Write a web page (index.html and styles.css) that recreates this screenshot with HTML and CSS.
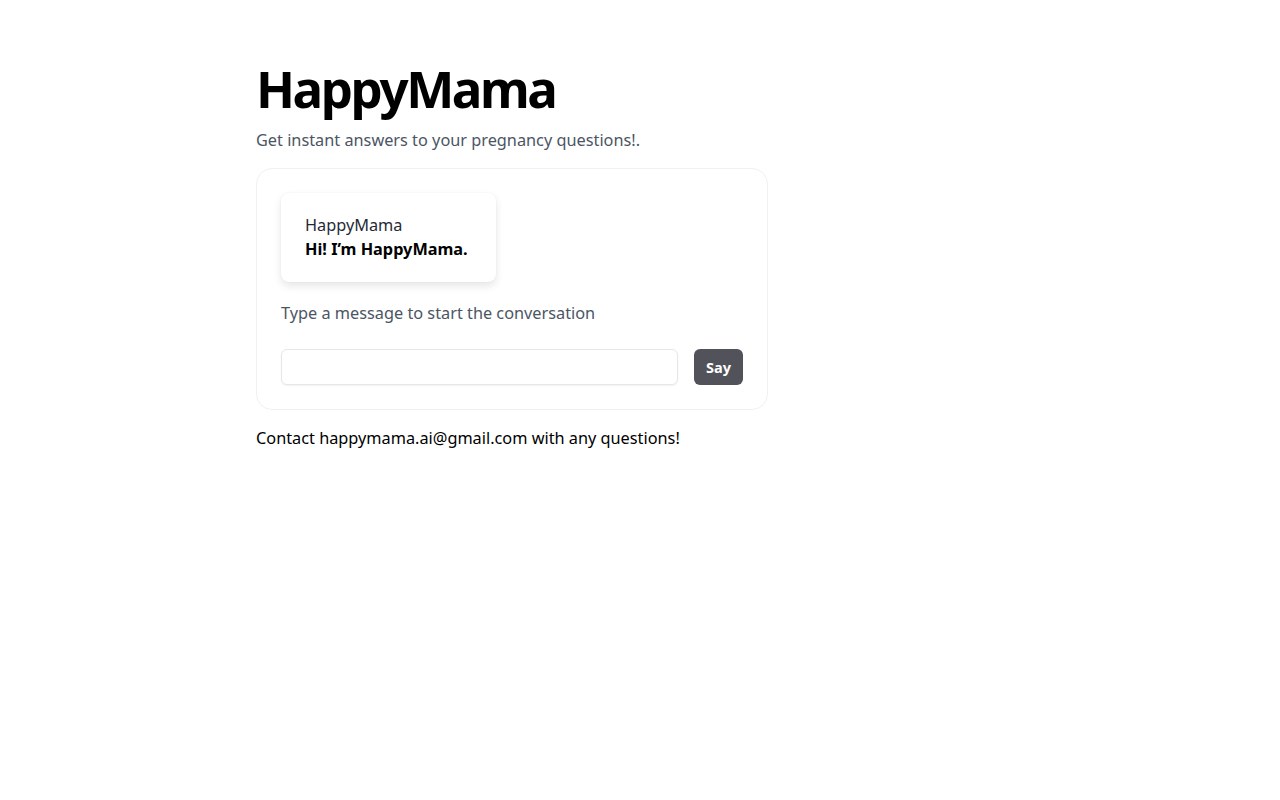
FILE: index.html
```html
<!DOCTYPE html>
<html>
<head>
<meta charset="utf-8">
<link rel="stylesheet" href="styles.css">
</head>
<body>
<main class="page">
  <h1 class="title">HappyMama</h1>
  <p class="subtitle">Get instant answers to your pregnancy questions!.</p>
  <section class="card">
    <div class="bubble">
      <div class="bubble-name">HappyMama</div>
      <div class="bubble-msg">Hi! I’m HappyMama.</div>
    </div>
    <p class="hint">Type a message to start the conversation</p>
    <form class="composer">
      <input class="input" type="text">
      <button class="say" type="button">Say</button>
    </form>
  </section>
  <p class="contact">Contact happymama.ai@gmail.com with any questions!</p>
</main>
</body>
</html>
```
FILE: styles.css
```css
html, body {
  margin: 0;
  padding: 0;
  background: #ffffff;
}
body {
  font-family: "Noto Sans", "Open Sans", sans-serif;
  color: #000;
}
.page {
  width: 512px;
  margin-left: 256px;
  padding-top: 56px;
}
.title {
  margin: 0;
  font-size: 51px;
  line-height: 64px;
  font-weight: 700;
  letter-spacing: -2.4px;
  color: #000;
}
.subtitle {
  margin: 8px 0 0;
  font-size: 16.3px;
  line-height: 24px;
  color: #4b5563;
}
.card {
  margin-top: 16px;
  border: 1px solid #f1f1f3;
  border-radius: 16px;
  padding: 24px;
  box-sizing: border-box;
  width: 512px;
}
.bubble {
  display: inline-block;
  padding: 20px 28px 21px 24px;
  border-radius: 8px;
  box-shadow: 0 4px 8px rgba(0,0,0,0.10), 0 0 2px rgba(0,0,0,0.05);
  background: #fff;
}
.bubble-name {
  font-size: 16.3px;
  line-height: 24px;
  color: #1f2937;
}
.bubble-msg {
  font-size: 16.3px;
  line-height: 24px;
  font-weight: 700;
  color: #000;
}
.hint {
  margin: 19px 0 0;
  font-size: 16.3px;
  line-height: 24px;
  color: #4b5563;
}
.composer {
  display: flex;
  gap: 16px;
  margin-top: 24px;
}
.input {
  flex: 1;
  height: 36px;
  box-sizing: border-box;
  border: 1px solid #e5e7eb;
  border-radius: 6px;
  box-shadow: 0 1px 2px rgba(0,0,0,0.06);
  font: inherit;
}
.say {
  width: 49px;
  height: 36px;
  border: none;
  border-radius: 6px;
  background: #52525b;
  color: #fff;
  font-family: inherit;
  font-weight: 700;
  font-size: 14.5px;
}
.contact {
  margin: 16px 0 0;
  font-size: 16.3px;
  line-height: 24px;
  color: #000;
}
```
